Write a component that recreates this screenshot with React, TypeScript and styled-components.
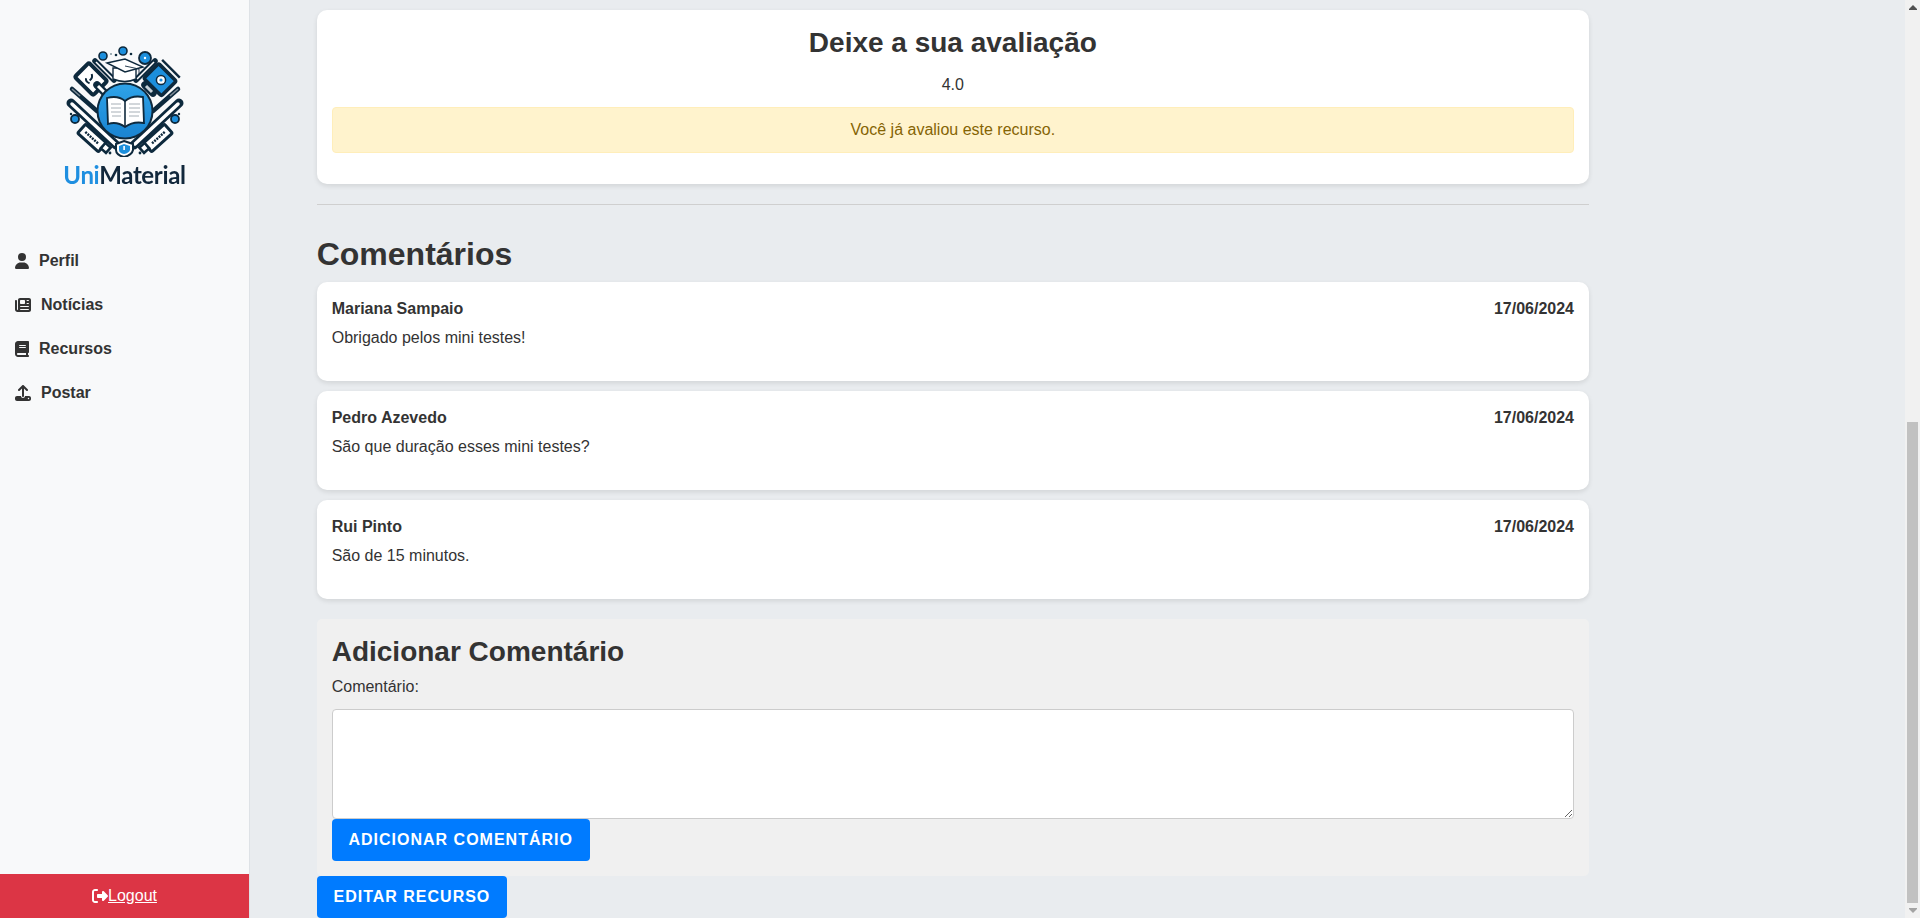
import React from "react";
import styled, { createGlobalStyle } from "styled-components";
import { FaUser, FaNewspaper, FaBook, FaUpload, FaRightFromBracket } from "react-icons/fa6";

const Global = createGlobalStyle`
  html, body { height: 100%; }
  body {
    margin: 0;
    background: #e9ecef;
    color: #333;
    font-family: "Liberation Sans", Arial, sans-serif;
    font-size: 16px;
    line-height: 1.5;
  }
  * { box-sizing: border-box; }
`;

const Shell = styled.div`
  height: 918px;
  display: flex;
  overflow: hidden;
`;

const Sidebar = styled.aside`
  flex: 0 0 250px;
  display: flex;
  flex-direction: column;
  background: #f8f9fa;
  border-right: 1px solid #dee2e6;
`;

const Brand = styled.div`
  height: 239px;
  display: flex;
  flex-direction: column;
  align-items: center;
  padding-top: 45px;
`;

const LogoMark = styled.svg`
  width: 120px;
  height: 112px;
  display: block;
`;

const BrandName = styled.div`
  font-family: "Lato", "Noto Sans", sans-serif;
  font-weight: 700;
  font-size: 24px;
  line-height: 28px;
  letter-spacing: -0.35px;
  margin-top: 4px;
  color: #12283c;
  filter: blur(0.3px);
`;

const BrandAccent = styled.span`
  color: #1f8fe0;
`;

const Nav = styled.nav`
  flex: 1;
  display: flex;
  flex-direction: column;
`;

const NavItem = styled.a<{ $iconWidth: number }>`
  height: 44px;
  display: flex;
  align-items: center;
  gap: 10px;
  padding-left: 15px;
  font-weight: 700;
  color: #333;
  text-decoration: none;

  svg {
    width: ${(p) => p.$iconWidth}px;
    height: 16px;
  }
`;

const LogoutLink = styled.a`
  height: 44px;
  display: flex;
  align-items: center;
  justify-content: center;
  background: #dc3545;
  color: #fff;
  text-decoration: underline;

  svg {
    width: 16px;
    height: 16px;
  }
`;

const Main = styled.main`
  flex: 1;
  padding: 10px 0 0 66.7px;
`;

const Content = styled.div`
  width: 1272.3px;
`;

const Card = styled.section`
  background: #fff;
  border-radius: 10px;
  box-shadow: 0 2px 5px rgba(0, 0, 0, 0.1);
  padding: 15px;
`;

const RatingCard = styled(Card)`
  text-align: center;
  height: 174px;
`;

const RatingTitle = styled.h2`
  margin: 0 0 12px;
  font-size: 28px;
  line-height: 35.6px;
  font-weight: 700;
  color: #333;
`;

const RatingValue = styled.div`
  margin-bottom: 10px;
`;

const Alert = styled.div`
  height: 46px;
  display: flex;
  align-items: center;
  justify-content: center;
  background: #fff3cd;
  border: 1px solid #ffeeba;
  border-radius: 4px;
  color: #856404;
`;

const Divider = styled.hr`
  margin: 20px 0 0;
  border: 0;
  border-top: 1px solid #cfcfcf;
`;

const SectionTitle = styled.h2`
  margin: 30px 0 9px;
  font-size: 32px;
  line-height: 38.4px;
  font-weight: 700;
  color: #333;
`;

const CommentList = styled.div`
  display: flex;
  flex-direction: column;
  gap: 10px;
`;

const CommentCard = styled(Card)`
  height: 99px;
`;

const CommentHead = styled.div`
  display: flex;
  justify-content: space-between;
  font-weight: 700;
  margin-bottom: 5px;
`;

const CommentText = styled.p`
  margin: 0;
`;

const AddBox = styled.section`
  margin-top: 20px;
  padding: 15px;
  background: #f0f0f0;
  border-radius: 5px;
`;

const AddTitle = styled.h3`
  margin: 0 0 5px;
  font-size: 28px;
  line-height: 35.6px;
  font-weight: 700;
  color: #333;
`;

const FieldLabel = styled.label`
  display: block;
  margin-bottom: 10px;
`;

const TextArea = styled.textarea`
  display: block;
  width: 100%;
  height: 110px;
  padding: 8px;
  background: #fff;
  border: 1px solid #ccc;
  border-radius: 4px;
  font: inherit;
`;

const Button = styled.button`
  display: block;
  height: 42px;
  padding: 0 16.8px;
  background: #007bff;
  color: #fff;
  border: 0;
  border-radius: 4px;
  font-family: inherit;
  font-size: 16px;
  font-weight: 700;
  letter-spacing: 1px;
  text-transform: uppercase;
`;

const ScrollTrack = styled.div`
  flex: 0 0 15px;
  display: flex;
  flex-direction: column;
  align-items: center;
  background: #f1f1f1;
`;

const ScrollButton = styled.div`
  flex: 0 0 15px;
  display: flex;
  align-items: center;
  justify-content: center;
`;

const ScrollThumb = styled.div`
  width: 11px;
  height: 481px;
  margin-top: 407px;
  background: #c1c1c1;
`;

const comments = [
  { author: "Mariana Sampaio", date: "17/06/2024", text: "Obrigado pelos mini testes!" },
  { author: "Pedro Azevedo", date: "17/06/2024", text: "São que duração esses mini testes?" },
  { author: "Rui Pinto", date: "17/06/2024", text: "São de 15 minutos." },
];

const navItems = [
  { label: "Perfil", icon: <FaUser />, iconWidth: 14 },
  { label: "Notícias", icon: <FaNewspaper />, iconWidth: 16 },
  { label: "Recursos", icon: <FaBook />, iconWidth: 14 },
  { label: "Postar", icon: <FaUpload />, iconWidth: 16 },
];

const NAVY = "#10293d";
const BLUE = "#1f8fdc";

const Side = () => (
  <g>
    <path d="M72 88 L97 110" stroke={NAVY} strokeWidth="4.5" strokeLinecap="round" />
    <path d="M72 88 L80 95" stroke="#7e8c97" strokeWidth="1.5" />
    <path d="M71 102 L116 144" stroke={NAVY} strokeWidth="9" strokeLinecap="round" />
    <path d="M72 103 L115 143" stroke="#fff" strokeWidth="3.5" strokeLinecap="round" />
    <g transform="rotate(42 92 137)">
      <rect x="78" y="131" width="28" height="12" rx="1.5" fill="#fff" stroke={NAVY} strokeWidth="3" />
      <path d="M83 137 H100" stroke={NAVY} strokeWidth="2.4" strokeDasharray="2 1" />
    </g>
    <rect x="102" y="143" width="7" height="7" transform="rotate(42 105 147)" fill="#fff" stroke={NAVY} strokeWidth="2.6" />
    <path d="M95 60 L114 79" stroke={NAVY} strokeWidth="5.5" strokeLinecap="round" />
    <path d="M96 61 L113 78" stroke="#fff" strokeWidth="1.6" />
    <circle cx="75" cy="118" r="4" fill={BLUE} stroke={NAVY} strokeWidth="1.8" />
    <circle cx="71" cy="113" r="1.2" fill={NAVY} />
    <circle cx="110" cy="152" r="1.4" fill={NAVY} />
  </g>
);

const Logo = () => (
  <LogoMark viewBox="65 44 120 112" aria-hidden="true">
    <defs>
      <filter id="soft">
        <feGaussianBlur stdDeviation="0.35" />
      </filter>
      <linearGradient id="disc" x1="0" y1="0" x2="0" y2="1">
        <stop offset="0" stopColor="#2fa3e8" />
        <stop offset="1" stopColor="#1a84d2" />
      </linearGradient>
    </defs>
    <g filter="url(#soft)">
      <Side />
      <g transform="translate(250 0) scale(-1 1)">
        <Side />
      </g>
      <g transform="rotate(45 91 78)">
        <rect x="78" y="68" width="26" height="20" rx="2" fill="#fff" stroke={NAVY} strokeWidth="4" />
        <path d="M88 74 q4 2 3 6 M93 82 q-4 2 -6 -1" fill="none" stroke={NAVY} strokeWidth="2" />
      </g>
      <g transform="rotate(45 160 78)">
        <rect x="148" y="68" width="25" height="21" rx="2" fill={BLUE} stroke={NAVY} strokeWidth="3.6" />
        <path d="M148 63 H173" stroke={NAVY} strokeWidth="2.4" />
      </g>
      <circle cx="161" cy="79" r="4.6" fill="#fff" stroke={NAVY} strokeWidth="1.5" />
      <circle cx="161" cy="79" r="1.6" fill={BLUE} />
      <path d="M145 84 L153 92" stroke={NAVY} strokeWidth="7.5" strokeLinecap="round" />
      <path d="M146 85 L152 91" stroke="#c8d2d9" strokeWidth="3" />
      <path d="M97 84 L105 92" stroke={NAVY} strokeWidth="7.5" strokeLinecap="round" />
      <path d="M98 85 L104 91" stroke="#fff" strokeWidth="3" />

      <path d="M113 67 V78 Q125 83 136 78 V67 Z" fill="#fff" stroke={NAVY} strokeWidth="1.4" />
      <path d="M107 62 L125 58 L143 66 L125 71 Z" fill="#fff" stroke={NAVY} strokeWidth="1.4" />
      <path d="M125 65 L139 68 V73" fill="none" stroke={NAVY} strokeWidth="0.9" />

      <circle cx="125" cy="110" r="28.5" fill={NAVY} />
      <circle cx="125" cy="110" r="26.5" fill="url(#disc)" />
      <path d="M107 97 Q118 94 125 100 Q132 94 143 96 L144 122 Q133 120 125 126 Q117 120 108 123 Z" fill="#fff" stroke={NAVY} strokeWidth="1.8" />
      <path d="M125 100 V126" stroke={NAVY} strokeWidth="1.6" />
      <path d="M111 103 H121 M111 107 H121 M111 111 H121 M112 115 H121 M129 103 H140 M129 107 H140 M129 111 H140 M129 115 H139" stroke="#a6afb6" strokeWidth="1" />

      <circle cx="103" cy="55" r="4" fill={BLUE} stroke={NAVY} strokeWidth="1.6" />
      <circle cx="123" cy="50" r="4" fill={BLUE} stroke={NAVY} strokeWidth="1.6" />
      <circle cx="145" cy="57" r="6" fill={BLUE} stroke={NAVY} strokeWidth="1.8" />
      <circle cx="145" cy="57" r="1.2" fill="#fff" />
      <circle cx="116" cy="54" r="1.3" fill={NAVY} />
      <circle cx="131" cy="53" r="1.3" fill={NAVY} />
      <circle cx="111" cy="53" r="0.7" fill={NAVY} />

      <path d="M124 140 L133 143 V149 Q132 154 124 156 Q116 154 116 149 V143 Z" fill="#fff" stroke={NAVY} strokeWidth="2" />
      <path d="M124 143 L130 145 V149 Q129 152 124 153 Q119 152 119 149 V145 Z" fill={BLUE} />
      <rect x="123.3" y="145" width="1.6" height="4" fill="#fff" />
    </g>
  </LogoMark>
);

export default function App() {
  return (
    <Shell>
      <Global />
      <Sidebar>
        <Brand>
          <Logo />
          <BrandName>
            <BrandAccent>Uni</BrandAccent>Material
          </BrandName>
        </Brand>
        <Nav>
          {navItems.map((item) => (
            <NavItem key={item.label} href="#" $iconWidth={item.iconWidth}>
              {item.icon}
              {item.label}
            </NavItem>
          ))}
        </Nav>
        <LogoutLink href="#">
          <FaRightFromBracket />
          Logout
        </LogoutLink>
      </Sidebar>
      <Main>
        <Content>
          <RatingCard>
            <RatingTitle>Deixe a sua avaliação</RatingTitle>
            <RatingValue>4.0</RatingValue>
            <Alert>Você já avaliou este recurso.</Alert>
          </RatingCard>
          <Divider />
          <SectionTitle>Comentários</SectionTitle>
          <CommentList>
            {comments.map((c) => (
              <CommentCard key={c.author}>
                <CommentHead>
                  <span>{c.author}</span>
                  <span>{c.date}</span>
                </CommentHead>
                <CommentText>{c.text}</CommentText>
              </CommentCard>
            ))}
          </CommentList>
          <AddBox>
            <AddTitle>Adicionar Comentário</AddTitle>
            <FieldLabel htmlFor="comentario">Comentário:</FieldLabel>
            <TextArea id="comentario" />
            <Button>Adicionar Comentário</Button>
          </AddBox>
          <Button>Editar Recurso</Button>
        </Content>
      </Main>
      <ScrollTrack>
        <ScrollButton>
          <svg width="8" height="5" viewBox="0 0 8 5" aria-hidden="true">
            <path d="M4 0 L8 4 V5 H0 V4 Z" fill="#505050" />
          </svg>
        </ScrollButton>
        <ScrollThumb />
        <ScrollButton>
          <svg width="8" height="5" viewBox="0 0 8 5" aria-hidden="true">
            <path d="M0 0 H8 V1 L4 5 L0 1 Z" fill="#a3a3a3" />
          </svg>
        </ScrollButton>
      </ScrollTrack>
    </Shell>
  );
}
